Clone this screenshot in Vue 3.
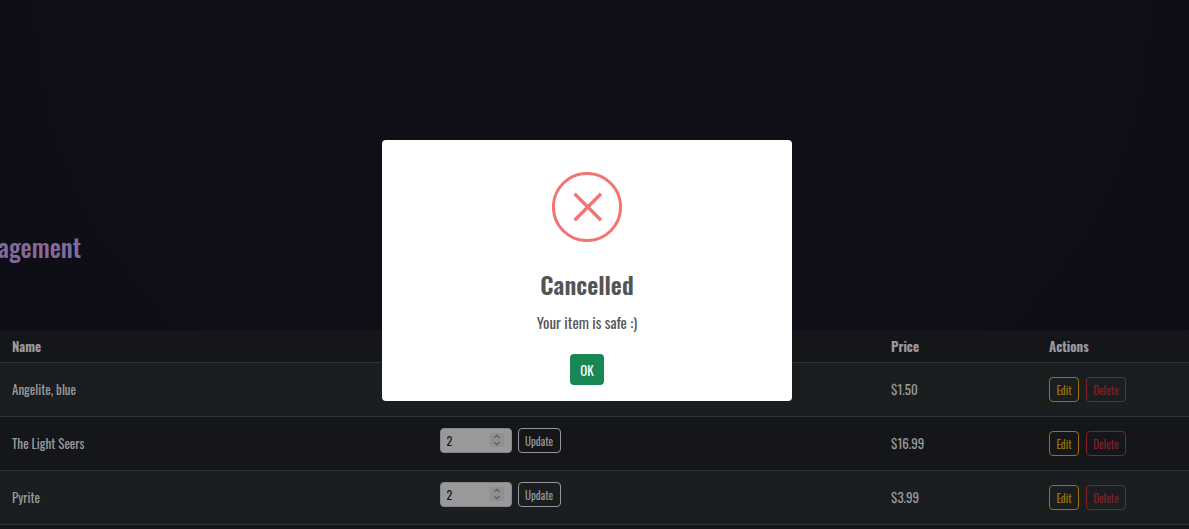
<script setup>
import { ref } from 'vue'

const items = ref([
  { id: 1, name: 'Angelite, blue', quantity: 2, price: '$1.50' },
  { id: 2, name: 'The Light Seers', quantity: 2, price: '$16.99' },
  { id: 3, name: 'Pyrite', quantity: 2, price: '$3.99' },
])
const open = ref(true)
</script>

<template>
  <div class="page">
    <header class="heading">
      <h1>agement</h1>
    </header>

    <main class="inventory">
      <table>
        <colgroup>
          <col class="col-name" />
          <col class="col-quantity" />
          <col class="col-price" />
          <col class="col-actions" />
        </colgroup>
        <thead>
          <tr>
            <th scope="col">Name</th>
            <td></td>
            <th scope="col">Price</th>
            <th scope="col">Actions</th>
          </tr>
        </thead>
        <tbody>
          <tr v-for="item in items" :key="item.id">
            <td class="text">{{ item.name }}</td>
            <td>
              <form class="quantity" @submit.prevent>
                <span class="stepper">
                  <input v-model="item.quantity" type="number" :aria-label="'Quantity of ' + item.name" />
                  <svg class="arrows" viewBox="0 0 14 14" aria-hidden="true">
                    <path d="M4.5 4.8 7 2.4 9.5 4.8M4.5 9.2 7 11.6 9.5 9.2" />
                  </svg>
                </span>
                <button type="submit" class="btn update">Update</button>
              </form>
            </td>
            <td class="text">{{ item.price }}</td>
            <td>
              <div class="actions">
                <button type="button" class="btn edit">Edit</button>
                <button type="button" class="btn delete">Delete</button>
              </div>
            </td>
          </tr>
        </tbody>
      </table>
    </main>

    <div v-if="open" class="overlay">
      <section class="dialog" role="dialog" aria-modal="true" aria-labelledby="dialog-title">
        <svg class="icon" viewBox="0 0 70 70" aria-hidden="true">
          <circle cx="35" cy="35" r="33.6" />
          <path d="M22.6 21.8 49 48.2M49 21.8 22.6 48.2" />
        </svg>
        <h2 id="dialog-title">Cancelled</h2>
        <p>Your item is safe :)</p>
        <button type="button" class="ok" @click="open = false">OK</button>
      </section>
    </div>
  </div>
</template>

<style>
body {
  margin: 0;
  background: #0d0d16;
}
</style>

<style scoped>
.page {
  box-sizing: border-box;
  display: flex;
  flex-direction: column;
  height: 100vh;
  overflow: hidden;
  background: radial-gradient(ellipse at 50% 0, #101018 0, #0d0d16 100%);
  color: #9b9b9d;
  font-family: Oswald, "Liberation Sans Narrow", "Liberation Sans", sans-serif;
  font-size: 13px;
  line-height: 16px;
}

.heading {
  flex: none;
  padding: 227px 0 63px;
}

h1 {
  margin: 0 0 0 -2px;
  color: #846a9b;
  font-size: 25px;
  line-height: 40px;
  font-weight: 500;
}

.inventory {
  flex: 1;
  background: #15161a;
}

table {
  width: 100%;
  border-collapse: separate;
  border-spacing: 0;
  table-layout: fixed;
}

.col-name {
  width: 36%;
}

.col-quantity {
  width: 38%;
}

.col-price {
  width: 158px;
}

.col-actions {
  width: 152px;
}

th,
td {
  padding: 0 12px;
  border-bottom: 1px solid #2f3235;
  text-align: left;
  vertical-align: middle;
}

td.text {
  padding-bottom: 2px;
}

thead tr {
  height: 33px;
}

tbody tr {
  height: 54px;
}

tbody tr:nth-child(odd) {
  background: #1a1e20;
}

.quantity {
  display: flex;
  gap: 6px;
  margin: 0;
  padding-bottom: 6px;
}

.stepper {
  position: relative;
  width: 72px;
}

.stepper input {
  box-sizing: border-box;
  width: 100%;
  height: 25px;
  padding: 0 24px 0 6px;
  border: 1px solid #83878b;
  border-radius: 4px;
  background: #999;
  color: #141618;
  font: inherit;
  font-size: 12px;
  appearance: textfield;
}

.stepper input::-webkit-inner-spin-button {
  appearance: none;
  margin: 0;
}

.arrows {
  position: absolute;
  top: 5px;
  right: 8px;
  width: 14px;
  height: 14px;
  background: #8e8f91;
  pointer-events: none;
}

.arrows path {
  fill: none;
  stroke: #5c5e62;
  stroke-width: 1.3;
}

.btn {
  box-sizing: border-box;
  height: 25px;
  padding: 0;
  border: 1px solid currentColor;
  border-radius: 4px;
  background: transparent;
  font: inherit;
  font-size: 11px;
}

.update {
  width: 43px;
  color: #959799;
}

.actions {
  display: flex;
  gap: 7px;
}

.edit {
  width: 30px;
  color: #997404;
}

.delete {
  width: 40px;
  color: #842029;
}

.overlay {
  position: fixed;
  inset: 0;
  display: flex;
  align-items: center;
  justify-content: center;
  padding: 12px 15px 0 0;
}

.dialog {
  box-sizing: border-box;
  display: flex;
  flex-direction: column;
  align-items: center;
  width: 410px;
  padding: 32px 16px 16px;
  border-radius: 4px;
  background: #fff;
  color: #545454;
}

.icon {
  width: 70px;
  height: 70px;
  fill: none;
  stroke: #f27474;
  stroke-width: 3;
}

.icon path {
  stroke-width: 3.4;
}

h2 {
  margin: 26px 0 0;
  font-size: 24px;
  line-height: 32px;
  font-weight: 600;
}

p {
  margin: 12px 0 0;
  font-size: 15px;
  line-height: 20px;
}

.ok {
  width: 34px;
  height: 31px;
  margin-top: 22px;
  padding: 0;
  border: 0;
  border-radius: 4px;
  background: #198754;
  color: #fff;
  font: inherit;
  font-size: 13px;
}
</style>
